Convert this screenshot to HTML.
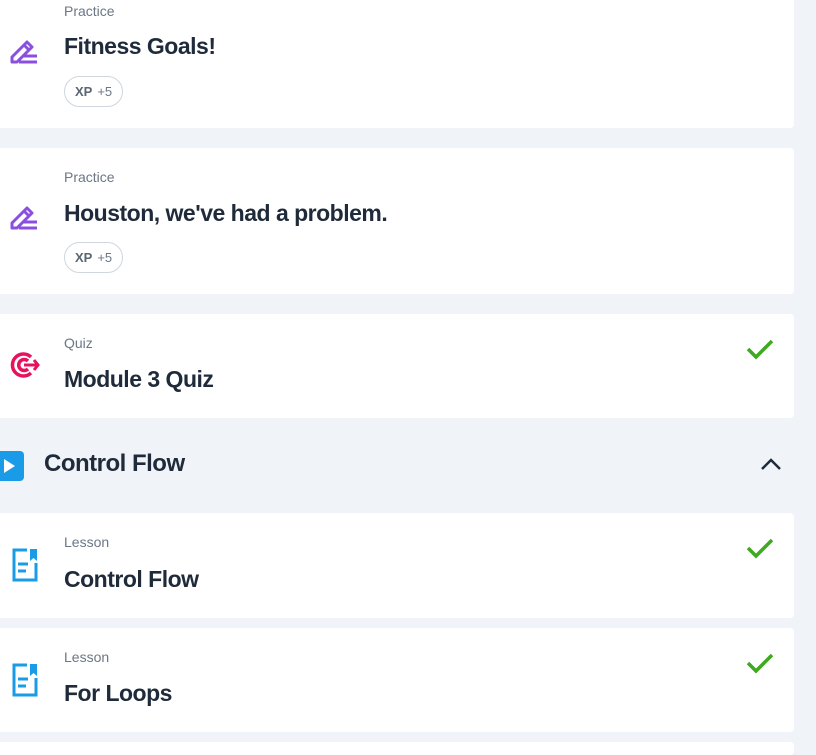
<!DOCTYPE html>
<html style="overflow:hidden"><head><style>
html,body{overflow:hidden}
body{margin:0;width:816px;height:755px;background:#f0f4f8;font-family:"Liberation Sans",sans-serif;position:relative}
.card{position:absolute;left:0;width:794px;background:#fff;border-radius:0 4px 4px 0}
.cat{position:absolute;left:64px;font-size:14px;color:#6b7785}
.title{position:absolute;left:64px;font-size:23px;font-weight:bold;color:#1f2b3a;letter-spacing:-0.5px}
.xp{position:absolute;left:64px;width:59px;height:31px;border:1px solid #cfd6de;border-radius:16px;font-size:13px;color:#6b7785;line-height:29px;box-sizing:border-box;padding-left:10px}
.xp b{color:#5a6674;margin-right:5px}
.ico{position:absolute;left:9px}
.chk{position:absolute;left:746px}
</style></head><body>
<div class="card" style="top:-5px;height:133px">
 <div class="cat" style="top:8px">Practice</div>
 <div class="title" style="top:38px">Fitness Goals!</div>
 <div class="xp" style="top:81px"><b>XP</b>+5</div>
 <svg class="ico" style="top:44px" width="30" height="26" viewBox="0 0 30 26"><path d="M3 23 L3 18 L18 3 L23 8 L8 23 Z M15 6 L20 11" fill="none" stroke="#8b4fe0" stroke-width="3" stroke-linejoin="round"/><path d="M14 17H28M10 23H28" stroke="#8b4fe0" stroke-width="3"/></svg>
</div>
<div class="card" style="top:148px;height:146px">
 <div class="cat" style="top:21px">Practice</div>
 <div class="title" style="top:52px">Houston, we've had a problem.</div>
 <div class="xp" style="top:94px"><b>XP</b>+5</div>
 <svg class="ico" style="top:57px" width="30" height="26" viewBox="0 0 30 26"><path d="M3 23 L3 18 L18 3 L23 8 L8 23 Z M15 6 L20 11" fill="none" stroke="#8b4fe0" stroke-width="3" stroke-linejoin="round"/><path d="M14 17H28M10 23H28" stroke="#8b4fe0" stroke-width="3"/></svg>
</div>
<div class="card" style="top:314px;height:104px">
 <div class="cat" style="top:21px">Quiz</div>
 <div class="title" style="top:52px">Module 3 Quiz</div>
 <svg class="ico" style="top:36px" width="32" height="30" viewBox="0 0 32 30"><path d="M22 7 A11 11 0 1 0 22 23" fill="none" stroke="#e8125c" stroke-width="3.5"/><path d="M19 11 A5.5 5.5 0 1 0 19 19" fill="none" stroke="#e8125c" stroke-width="3.5"/><path d="M15 15H30M25 10L29 15L25 20" fill="none" stroke="#e8125c" stroke-width="3"/></svg>
 <svg class="chk" style="top:24px" width="28" height="22" viewBox="0 0 28 22"><path d="M2 11L10 19L26 3" fill="none" stroke="#3faa1f" stroke-width="3.5"/></svg>
</div>
<svg style="position:absolute;left:0;top:451px" width="24" height="30" viewBox="0 0 24 30"><rect x="-6" y="0" width="30" height="30" rx="4" fill="#1a9be8"/><path d="M4 8L15 15L4 22Z" fill="#fff"/></svg>
<div style="position:absolute;left:44px;top:450px;font-size:24px;font-weight:bold;color:#1f2b3a;letter-spacing:-0.5px">Control Flow</div>
<svg style="position:absolute;left:760px;top:456px" width="22" height="16" viewBox="0 0 22 16"><path d="M2 13L11 4L20 13" fill="none" stroke="#1f2b3a" stroke-width="2.5"/></svg>
<div class="card" style="top:513px;height:105px">
 <div class="cat" style="top:21px">Lesson</div>
 <div class="title" style="top:53px">Control Flow</div>
 <svg class="ico" style="top:35px;left:12px" width="26" height="34" viewBox="0 0 26 34"><path d="M15 2H2V32H24V15" fill="none" stroke="#1a9be8" stroke-width="3"/><path d="M18 1H25V13L21.5 10L18 13Z" fill="#1a9be8"/><path d="M6 16H16M6 23H14" stroke="#1a9be8" stroke-width="3"/></svg>
 <svg class="chk" style="top:24px" width="28" height="22" viewBox="0 0 28 22"><path d="M2 11L10 19L26 3" fill="none" stroke="#3faa1f" stroke-width="3.5"/></svg>
</div>
<div class="card" style="top:628px;height:104px">
 <div class="cat" style="top:21px">Lesson</div>
 <div class="title" style="top:52px">For Loops</div>
 <svg class="ico" style="top:35px;left:12px" width="26" height="34" viewBox="0 0 26 34"><path d="M15 2H2V32H24V15" fill="none" stroke="#1a9be8" stroke-width="3"/><path d="M18 1H25V13L21.5 10L18 13Z" fill="#1a9be8"/><path d="M6 16H16M6 23H14" stroke="#1a9be8" stroke-width="3"/></svg>
 <svg class="chk" style="top:24px" width="28" height="22" viewBox="0 0 28 22"><path d="M2 11L10 19L26 3" fill="none" stroke="#3faa1f" stroke-width="3.5"/></svg>
</div>
<div class="card" style="top:742px;height:13px"></div>
</body></html>
